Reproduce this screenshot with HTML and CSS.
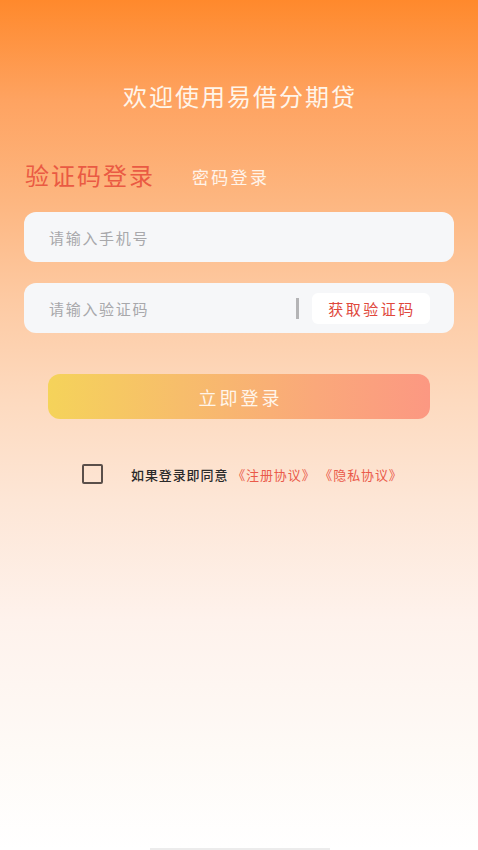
FILE: index.html
```html
<!DOCTYPE html>
<html lang="zh-CN">
<head>
<meta charset="utf-8">
<title>登录</title>
<link rel="stylesheet" href="styles.css">
</head>
<body>
<div class="page">
  <h1 class="title">欢迎使用易借分期贷</h1>
  <div class="tabs">
    <span class="tab active">验证码登录</span>
    <span class="tab">密码登录</span>
  </div>
  <div class="field">
    <span class="placeholder">请输入手机号</span>
  </div>
  <div class="field code">
    <span class="placeholder">请输入验证码</span>
    <span class="divider"></span>
    <span class="get-code">获取验证码</span>
  </div>
  <div class="login-btn">立即登录</div>
  <div class="agree">
    <span class="checkbox"></span>
    <span class="agree-text">如果登录即同意 <span class="link">《注册协议》 《隐私协议》</span></span>
  </div>
  <div class="home-bar"></div>
</div>
</body>
</html>
```
FILE: styles.css
```css
* { box-sizing: border-box; margin: 0; padding: 0; }
html, body { width: 478px; height: 850px; overflow: hidden; }
body {
  font-family: "Noto Sans CJK SC", "Noto Sans", sans-serif;
  background: #fff;
}
.page {
  position: relative;
  height: 850px;
  display: flex;
  flex-direction: column;
  background: linear-gradient(180deg,
    #ff892c 0px,
    #fea361 100px,
    #fdb680 200px,
    #fdcaa3 300px,
    #fddabf 400px,
    #fde6d6 500px,
    #fef2ec 620px,
    #fefaf6 750px,
    #ffffff 850px);
}
.title {
  margin-top: 80px;
  text-align: center;
  font-size: 24px;
  font-weight: 400;
  letter-spacing: 2px;
  line-height: 32px;
  color: #fff5ea;
  padding-left: 2px;
}
.tabs {
  margin-top: 46px;
  padding-left: 25px;
  display: flex;
  align-items: center;
  gap: 37px;
  height: 34px;
}
.tab {
  font-size: 17px;
  letter-spacing: 2.3px;
  color: #fff4ea;
  line-height: 24px;
  padding-top: 4px;
}
.tab.active {
  font-size: 24px;
  letter-spacing: 2px;
  color: #ea5a43;
  line-height: 34px;
  padding-top: 0;
}
.field {
  margin: 20px 24px 0;
  height: 50px;
  background: #f6f7f9;
  border-radius: 12px;
  display: flex;
  align-items: center;
  padding-left: 25px;
}
.field.code { margin-top: 21px; padding-right: 24px; }
.placeholder {
  font-size: 15px;
  letter-spacing: 1.7px;
  color: #a8a8ab;
  flex: 1;
}
.divider {
  width: 3px;
  height: 21px;
  background: #b4b4b6;
  margin-right: 13px;
}
.get-code {
  width: 118px;
  height: 31px;
  background: #fff;
  border-radius: 6px;
  display: flex;
  align-items: center;
  justify-content: center;
  font-size: 15px;
  letter-spacing: 2.5px;
  color: #e0483c;
  padding-left: 2px;
}
.login-btn {
  margin: 41px 48px 0;
  height: 45px;
  border-radius: 12px;
  background: linear-gradient(90deg, #f5d35a 0%, #f7bd6b 35%, #faa87a 70%, #fc9882 100%);
  display: flex;
  align-items: center;
  justify-content: center;
  font-size: 18px;
  letter-spacing: 3px;
  color: #fff5ea;
  padding-left: 3px;
}
.agree {
  margin-top: 44px;
  padding-left: 82px;
  display: flex;
  align-items: center;
  height: 22px;
}
.checkbox {
  width: 21px;
  height: 20px;
  border: 2px solid #5a4f4a;
  border-radius: 2px;
  margin-right: 28px;
}
.agree-text {
  font-size: 13px;
  font-weight: 500;
  letter-spacing: 0.9px;
  color: #2a2a2a;
  white-space: pre;
}
.link { color: #ea5a4a; font-weight: 400; }
.home-bar {
  position: absolute;
  left: 150px;
  bottom: 0;
  width: 180px;
  height: 2px;
  background: #ececec;
}
```
